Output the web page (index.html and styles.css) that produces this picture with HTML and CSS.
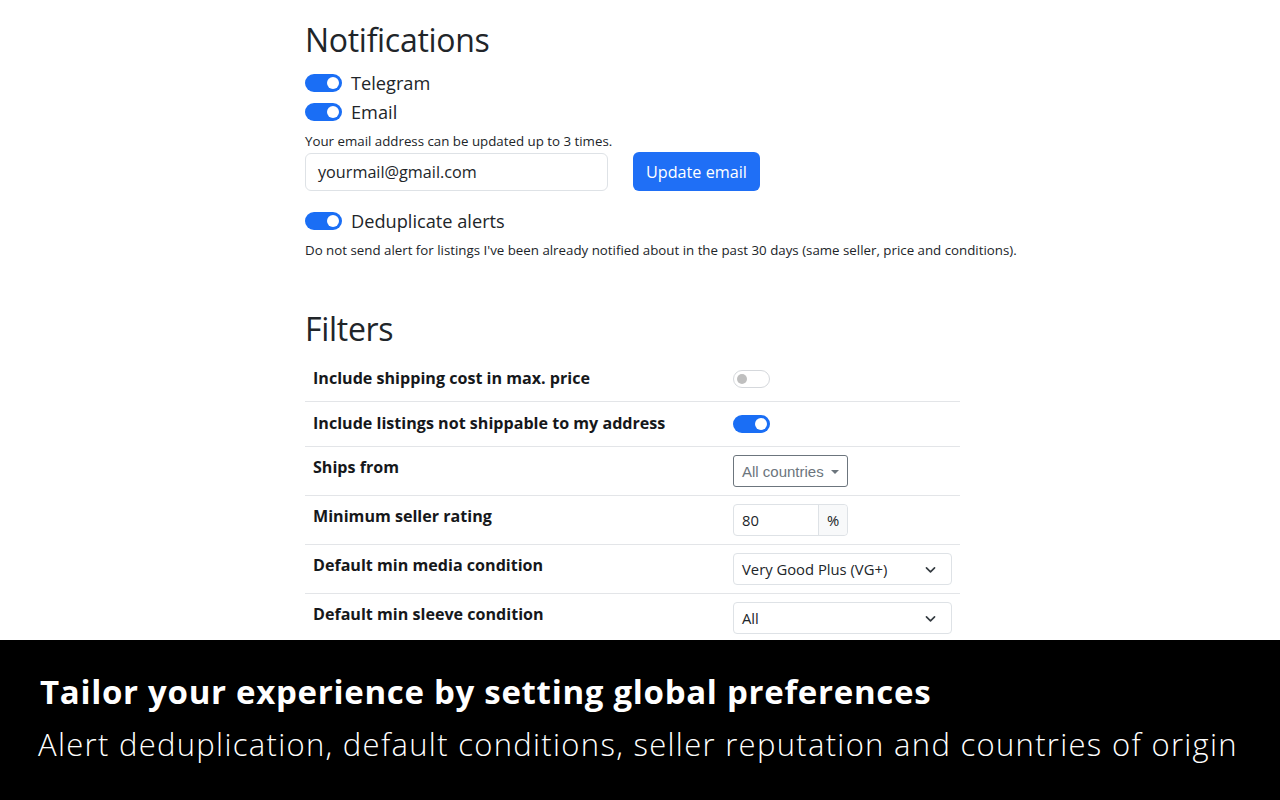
FILE: index.html
```html
<!DOCTYPE html>
<html lang="en">
<head>
<meta charset="utf-8">
<title>Settings</title>
<link rel="stylesheet" href="styles.css">
</head>
<body>
<main class="container">
  <section class="section">
    <h2 class="heading">Notifications</h2>
    <div class="switch-row"><span class="switch on"></span><span class="switch-label">Telegram</span></div>
    <div class="switch-row"><span class="switch on"></span><span class="switch-label">Email</span></div>
    <p class="help help-email">Your email address can be updated up to 3 times.</p>
    <div class="email-row">
      <div class="input email-input">yourmail@gmail.com</div>
      <button class="btn">Update email</button>
    </div>
    <div class="switch-row dedup"><span class="switch on"></span><span class="switch-label">Deduplicate alerts</span></div>
    <p class="help help-dedup">Do not send alert for listings I've been already notified about in the past 30 days (same seller, price and conditions).</p>
  </section>

  <section class="section filters">
    <h2 class="heading">Filters</h2>
    <table class="table">
      <tbody>
        <tr class="row-switch">
          <th>Include shipping cost in max. price</th>
          <td><span class="switch off"></span></td>
        </tr>
        <tr class="row-switch">
          <th>Include listings not shippable to my address</th>
          <td><span class="switch on"></span></td>
        </tr>
        <tr>
          <th>Ships from</th>
          <td><div class="dropdown">All countries <span class="caret"></span></div></td>
        </tr>
        <tr>
          <th>Minimum seller rating</th>
          <td><div class="input-group"><span class="ig-input">80</span><span class="ig-addon">%</span></div></td>
        </tr>
        <tr>
          <th>Default min media condition</th>
          <td><div class="select">Very Good Plus (VG+)<svg class="chev" viewBox="0 0 16 16" width="13" height="13"><path d="M3 6l5 5 5-5" fill="none" stroke="#343a40" stroke-width="2" stroke-linecap="round" stroke-linejoin="round"/></svg></div></td>
        </tr>
        <tr>
          <th>Default min sleeve condition</th>
          <td><div class="select">All<svg class="chev" viewBox="0 0 16 16" width="13" height="13"><path d="M3 6l5 5 5-5" fill="none" stroke="#343a40" stroke-width="2" stroke-linecap="round" stroke-linejoin="round"/></svg></div></td>
        </tr>
      </tbody>
    </table>
  </section>
</main>

<footer class="caption">
  <h1 class="caption-title">Tailor your experience by setting global preferences</h1>
  <p class="caption-sub">Alert deduplication, default conditions, seller reputation and countries of origin</p>
</footer>
</body>
</html>
```

FILE: styles.css
```css
html, body {
  margin: 0;
  padding: 0;
  background: #fff;
  height: 800px;
  overflow: hidden;
}
body {
  font-family: "Open Sans", "Noto Sans", sans-serif;
  color: #212529;
}
.container {
  width: 670px;
  margin: 0 auto;
  padding-top: 20px;
}
.heading {
  font-size: 32px;
  font-weight: 500;
  margin: 0 0 8px 0;
  line-height: 40px;
  letter-spacing: -0.3px;
}
.switch-row {
  display: flex;
  align-items: center;
  height: 29px;
}
.switch {
  display: block;
  position: relative;
  width: 37px;
  height: 18px;
  border-radius: 10px;
  box-sizing: border-box;
  flex: none;
}
.switch.on {
  background: #1a6ef5;
}
.switch.on::after {
  content: "";
  position: absolute;
  right: 3px;
  top: 3px;
  width: 12px;
  height: 12px;
  border-radius: 50%;
  background: #fff;
}
.switch.off {
  border: 1px solid #d5d8dc;
  background: #fff;
}
.switch.off::after {
  content: "";
  position: absolute;
  left: 3px;
  top: 3px;
  width: 10px;
  height: 10px;
  border-radius: 50%;
  background: #bfbfbf;
}
.switch-label {
  margin-left: 9px;
  font-size: 18.2px;
}
.help {
  font-size: 13.3px;
  margin: 0;
  white-space: nowrap;
}
.help-email {
  margin-top: 6px;
}
.email-row {
  display: flex;
  align-items: center;
  margin-top: 2px;
  gap: 25px;
}
.input {
  box-sizing: border-box;
  height: 38px;
  border: 1px solid #dee2e6;
  border-radius: 6px;
  padding: 0 12px;
  font-size: 16.2px;
  display: flex;
  align-items: center;
}
.email-input {
  width: 303px;
}
.btn {
  box-sizing: border-box;
  height: 39px;
  padding: 0 13px;
  background: #1f6ff6;
  color: #fff;
  border: 0;
  border-radius: 6px;
  font-family: inherit;
  font-size: 16.2px;
}
.dedup {
  margin-top: 15px;
}
.help-dedup {
  margin-top: 6px;
}
.filters {
  margin-top: 50px;
}
.filters .heading {
  margin-bottom: 8px;
}
.table {
  width: 655px;
  border-collapse: collapse;
}
.table th, .table td {
  text-align: left;
  vertical-align: top;
  padding: 8px;
  border-bottom: 1px solid #e3e5e8;
}
.table th {
  width: 404px;
  font-weight: 700;
  font-size: 16.1px;
  line-height: 24px;
  color: #16181b;
}
.row-switch td {
  padding-top: 13px;
  padding-bottom: 13px;
}
.row-switch th {
  padding-top: 9px;
  padding-bottom: 9px;
}
.dropdown {
  display: inline-flex;
  align-items: center;
  box-sizing: border-box;
  height: 32px;
  padding: 0 8px;
  border: 1px solid #6c757d;
  border-radius: 3px;
  font-family: "Liberation Sans", Arial, sans-serif;
  font-size: 15px;
  color: #6c757d;
}
.caret {
  display: inline-block;
  margin-left: 7px;
  border-left: 4px solid transparent;
  border-right: 4px solid transparent;
  border-top: 4px solid #6c757d;
  margin-top: 1px;
}
.input-group {
  display: inline-flex;
  box-sizing: border-box;
  height: 32px;
  border: 1px solid #dee2e6;
  border-radius: 4px;
  font-size: 14.8px;
}
.ig-input {
  width: 68px;
  padding: 0 8px;
  display: flex;
  align-items: center;
}
.ig-addon {
  width: 28px;
  border-left: 1px solid #dee2e6;
  background: #f8f9fa;
  display: flex;
  align-items: center;
  justify-content: center;
  border-radius: 0 4px 4px 0;
}
.select {
  box-sizing: border-box;
  width: 219px;
  height: 32px;
  border: 1px solid #dee2e6;
  border-radius: 4px;
  padding: 0 14px 0 8px;
  display: flex;
  align-items: center;
  justify-content: space-between;
  font-size: 14.8px;
}
.caption {
  position: fixed;
  left: 0;
  right: 0;
  bottom: 0;
  height: 160px;
  background: #000;
  color: #fff;
  box-sizing: border-box;
  padding: 30px 0 0 40px;
}
.caption-title {
  margin: 0;
  font-size: 33px;
  line-height: 44px;
  font-weight: 700;
  letter-spacing: 0.7px;
  white-space: nowrap;
}
.caption-sub {
  margin: 8px 0 0 -2px;
  font-size: 31px;
  line-height: 44px;
  font-weight: 300;
  letter-spacing: 1.3px;
  white-space: nowrap;
}
```
